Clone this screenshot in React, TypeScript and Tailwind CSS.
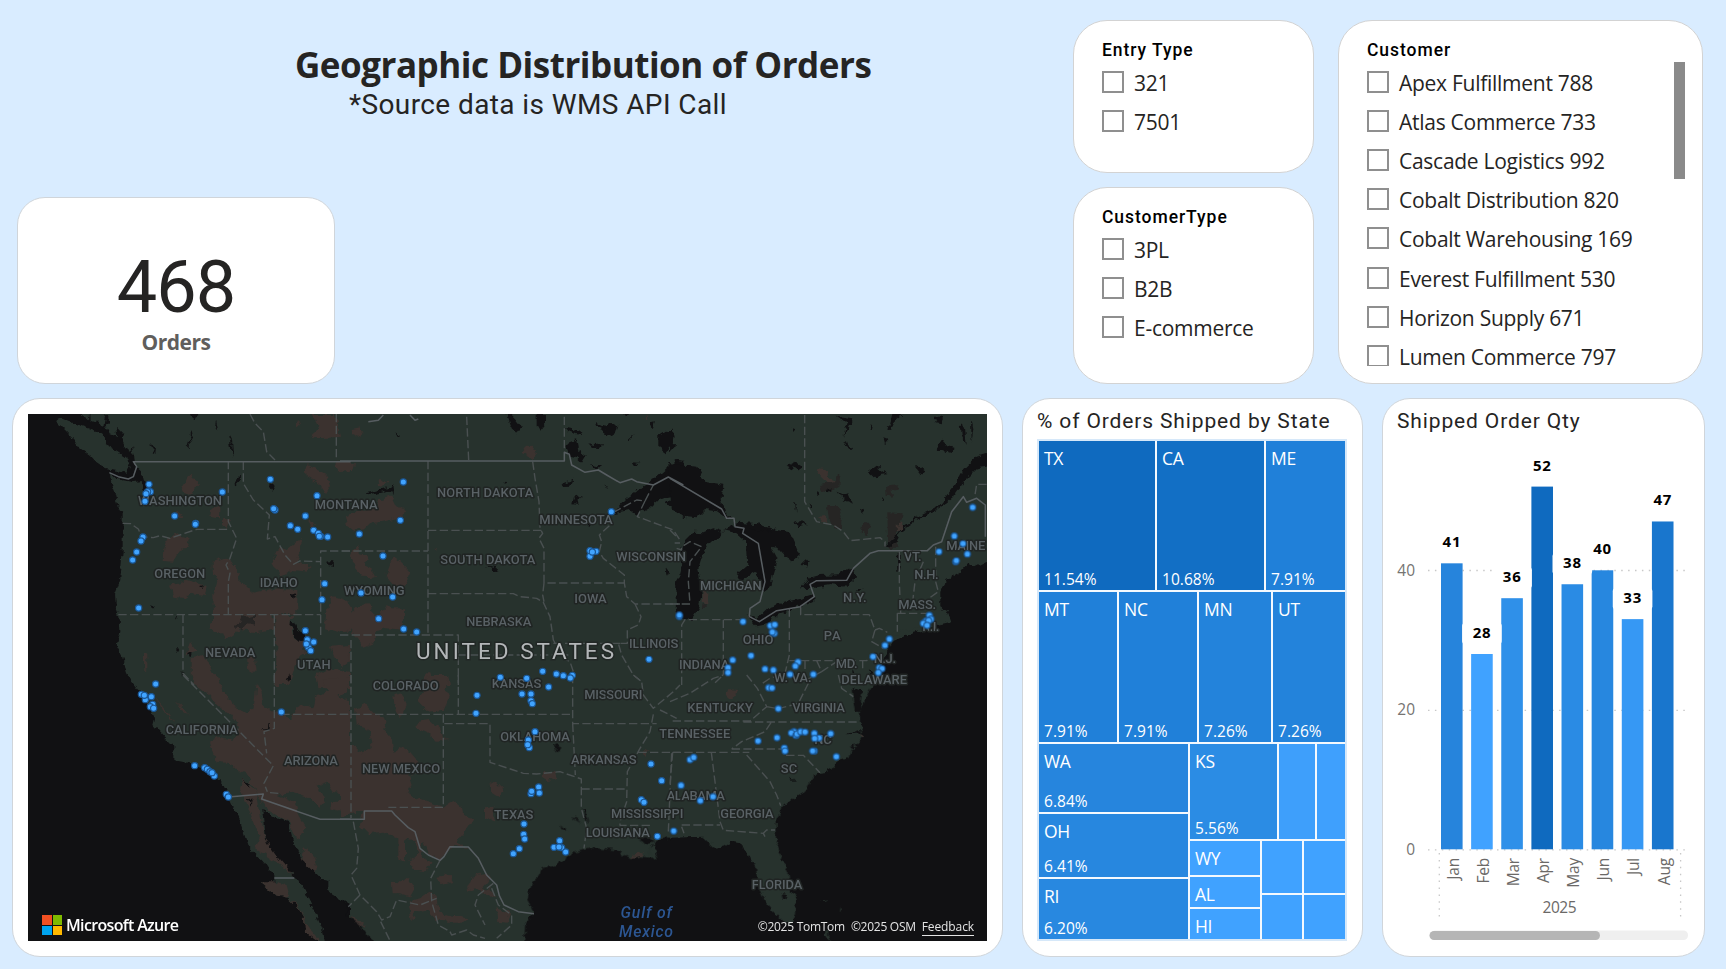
import type { ReactNode } from "react";

const SEGOE = "font-['Open_Sans','Noto_Sans',sans-serif]";
const DIN = "font-['Roboto','Liberation_Sans',sans-serif]";

type Label = [text: string, x1: number, x2: number, baseline: number];

interface Tile {
  x: number;
  y: number;
  water: string;
  lakes: string;
  land: string;
  arid: string;
  urban: string;
  solid: string;
  dashed: string;
  labels: Label[];
  dots: number[][];
}

const tiles: Tile[] = [
  {
    x: 10,
    y: 395,
    water:
      "M0 30H200L225 70L262 84L290 95L302 118L335 130L350 165L372 178L375 210L392 225L396 250L412 262V305L402 290L392 258L370 262L340 256L300 236L303 262L318 300L328 345L338 355V470L330 560L315 600L318 640L328 665L331 710L320 750L340 790L350 835L372 880H0Z",
    lakes:
      "M540 57H565L558 72L545 68ZM615 75L622 110L612 95ZM545 108L548 125L538 140L540 160L530 150ZM657 115L665 130L668 160L675 185L664 165ZM420 145L438 155L436 178L428 180L434 165ZM676 250L690 246L688 262L678 272ZM782 262L795 270L788 290L780 278ZM952 500L970 498L968 512L955 510ZM845 600L860 595L852 612ZM568 574L582 570L574 582ZM420 628L434 632L430 643ZM495 658H504L500 674ZM840 680L852 682L862 705L885 715L886 735L870 738L850 720L848 700L838 692ZM890 768L896 762V776ZM533 770L545 775L541 790ZM498 762L508 764L504 772ZM838 835L840 850L830 858ZM514 826L520 832L516 842ZM290 57L296 80L285 100L280 90L284 70ZM238 57L240 85L230 80ZM318 95L340 118L330 135L322 120ZM365 150L372 180L360 178Z",
    land: "M135 75L150 68L178 80L215 92L250 105L278 122L290 150L325 172L355 195L362 218L350 236L320 228L290 222L260 202L240 180L210 160L190 130L160 100Z",
    arid:
      "M905 57H975L985 90L990 125L960 128L905 130L925 95ZM860 72L870 90L862 95ZM540 235L568 268L548 290L540 305L520 290L515 280ZM470 430L500 418L540 430L530 455L508 470L490 500L458 498L460 460ZM600 345L632 330L630 370L598 365ZM500 345L520 365L490 378ZM480 570L530 555L590 572L585 600L545 595L520 612L490 608ZM608 500L640 488L665 500L682 530L690 560L730 590L780 580L862 585V655L790 660L795 700L740 712L690 705L655 730L620 715L595 695L612 670L610 600L622 560L608 530ZM785 500L810 455L830 465L855 445L880 432L870 465L860 500L905 515L895 530L850 525L810 545ZM795 660H860L838 680L850 725L880 740L885 775L860 790L850 830L835 870H793L800 780ZM885 205L950 240L960 270L945 295L930 270L890 245ZM975 200H1020V230L985 235ZM890 375L915 385L905 400ZM965 605L990 612L1020 640V710H980L945 700L948 655ZM960 755L1020 750V800L975 795ZM920 840L960 820L1020 830V880H925ZM545 790L575 780L600 810L615 850L600 880H560L545 840ZM402 770L412 772L412 830L402 820ZM710 780L735 790L740 830L715 830ZM640 365L660 380L650 405L638 395ZM540 740L560 770L530 780Z",
    urban: "M695 662L710 668L735 662V690L715 685L700 705L675 700Z",
    solid: "M298 233L325 245L355 252L370 245L380 215L370 200H1022",
    dashed:
      "M655 198V380L680 430L660 490L648 510L660 535L655 560V659M700 200V265L730 315L778 360L772 432L795 425L825 480L850 508L870 498L932 500M932 720V468H1024M338 385L362 386L385 402L395 425L430 428L450 422L480 430L560 403H655M325 659H932M519 659V835L552 870M793 659V870M720 57L735 85L760 110L770 170L795 195M979 57V195",
    labels: [
      ["WASHINGTON", 384, 636, 332],
      ["OREGON", 433, 586, 550],
      ["IDAHO", 749, 863, 579],
      ["NEVADA", 585, 736, 789],
      ["UTAH", 861, 962, 825],
    ],
    dots: [[417,268],[421,290],[413,290],[408,296],[405,319],[637,291],[494,363],[557,385],[556,388],[399,426],[393,438],[380,471],[368,495],[386,639],[781,253],[921,302],[795,345],[791,341],[886,363],[841,392],[863,403],[911,406],[925,415],[932,424],[928,424],[953,426],[944,566],[936,614],[886,707],[892,734],[911,741],[895,757],[889,747],[902,767],[437,867]],
  },
  {
    x: 340,
    y: 395,
    water:
      "M820 355L860 310L920 270L950 245L985 215L1010 198L1030 200V350L1000 345L980 325L1010 300L960 310L930 335L890 360L868 345ZM1008 560L1020 540V650H1012Z",
    lakes:
      "M500 57H512L525 70L545 95L530 115L515 100ZM590 57H618V85L600 108L590 90ZM765 80L780 92L800 95L812 82L835 92L828 115L808 122L790 108L772 100ZM955 122L975 110L1000 112L1000 150L978 172L955 155ZM675 150L700 140L708 128L715 165L740 180L725 205L710 190L690 185ZM678 98L695 102L712 110L730 108L725 120L700 115L685 108ZM745 145L765 150L790 148L780 160L755 155ZM750 205L785 212L770 222ZM850 57H870L855 64ZM930 85L945 82L938 100ZM862 135L882 118L870 135ZM880 202L895 203L888 214ZM668 265L700 254L690 275L672 276ZM705 305L722 300L712 315L716 330L700 328ZM790 272L808 276L800 280ZM485 263L503 264L496 270ZM160 268L148 275L118 285L95 292L75 295L90 300L125 293L152 285L160 300L162 288ZM165 116L182 118L178 126ZM440 515L470 520L475 530L455 524ZM980 520L988 530L982 545ZM742 390H752L748 396Z",
    land: "",
    arid:
      "M35 105L60 100L68 115L50 125L38 120ZM0 200L45 205L40 225L0 225ZM120 252L142 262L130 275L112 268ZM558 155L575 155L588 175L575 195L558 180L545 172ZM15 365L60 345L110 340L120 315L155 303L168 330L195 345L190 365L160 372L130 380L90 385L75 400L40 405L20 390ZM30 480L50 450L60 475L85 480L75 510L95 520L105 545L90 550L70 548L45 520ZM140 535L160 485L180 500L210 530L205 560L185 590L165 575L150 555ZM0 610L25 618L35 650L55 630L90 628L95 660L115 655L130 645L140 630L155 640L192 640V705L140 700L110 705L105 740L70 755L45 725L35 700L0 715ZM282 458H290V464ZM0 750L30 755L25 800L0 820ZM240 860L270 830L285 870H245ZM290 850L325 840L330 870H295ZM910 72L924 57L918 76Z",
    urban: "",
    solid:
      "M0 198H673V172L688 178L695 210L735 232L775 225L800 240L840 263L875 252L890 260L940 270L985 246L1030 270M85 80L115 76L130 60M210 60L225 76L235 72",
    dashed:
      "M264 198V716M264 406H610M264 596H520L540 605L590 610L610 622L630 665L640 735L672 790L690 800L700 830M380 65L386 195M673 65V170M578 200L585 250L597 320L600 400L608 415L597 430L612 460V564H853M612 564L608 600L612 620M5 468H264M0 720H355V870M33 735V870M355 780H685M640 745H860M808 392L778 420L785 440L778 470L790 490L853 540V564L860 605L885 627H1020M885 627L903 665L895 690L862 705V745L835 745L845 780L880 840L905 860M820 352L890 315L915 318L940 270M915 318L892 365L1000 405L1020 435M1004 444H1020",
    labels: [
      ["MONTANA", -76, 113, 344],
      ["WYOMING", 12, 194, 602],
      ["NORTH DAKOTA", 291, 580, 308],
      ["SOUTH DAKOTA", 301, 586, 510],
      ["NEBRASKA", 379, 574, 696],
      ["MINNESOTA", 598, 818, 389],
      ["IOWA", 703, 800, 627],
      ["WISCONSIN", 829, 1038, 501],
      ["ILLINOIS", 867, 1015, 761],
    ],
    dots: [[190,261],[181,376],[58,417],[129,483],[63,594],[158,606],[116,671],[191,702],[230,711],[814,350],[750,467],[768,469],[750,484],[757,471],[608,829],[649,837],[670,842],[697,841],[691,849],[481,847],[560,850],[927,793]],
  },
  {
    x: 670,
    y: 395,
    water:
      "M-5 203L40 212L85 215L105 260L160 270L155 310L165 350L190 370L160 362L140 348L105 345L80 370L40 365L0 335ZM40 440L70 410L100 412L130 400L160 410L150 430L120 440L100 470L85 520L90 560L95 600L85 640L65 672L35 675L20 650L22 570L35 520L30 480ZM160 405L195 388L260 388L320 405L360 412L390 480L370 498L340 482L322 462L305 458L322 490L308 540L302 575L285 588L270 560L255 530L235 545L205 555L200 540L235 510L230 440L200 415ZM230 660L262 672L300 635L350 620L400 610L430 600V614L380 640L330 655L290 688L260 694ZM393 580L415 550L450 540L510 538L550 515L558 550L530 575L480 570L430 578ZM635 462L680 422L700 392L760 355L810 330L850 280L880 225L920 185L970 170V213L920 220L880 260L845 310L800 345L740 375L690 412L680 440ZM980 496L951 502L915 520L890 505L870 530L830 555L808 590V640L835 655L845 680L800 690L750 705L700 725L665 740L655 760L640 790L620 840L605 880H980Z",
    lakes:
      "M0 100L14 120L10 160L0 175ZM365 95L376 100L370 115ZM500 62L550 70L535 100L520 125L530 85ZM600 85L608 95L600 108ZM655 105L668 57H700L675 78L665 100ZM640 130L655 135L645 148ZM795 65H820L812 85L800 82ZM872 85L885 95L890 150L875 120ZM903 70L910 100L905 140ZM800 165L820 135L830 150L850 155L848 175L820 165ZM595 232L620 212L635 225L652 238L630 240L615 250ZM735 218L752 215L765 225L750 238ZM350 212L375 200L400 215L385 226ZM520 140L550 158L545 165L528 155ZM500 290L520 300L535 295L548 325L530 318L510 305ZM375 322L383 325L378 348ZM435 295L450 290L445 300ZM470 285L485 280L478 295ZM415 325L428 335L425 345ZM565 345L580 335L580 358ZM395 505L410 490L420 500L408 518ZM640 300L648 310L640 318ZM190 382L260 388L310 402L290 410L220 400ZM370 385L400 376L410 388L385 394ZM560 582H578L570 588ZM683 470H692V520L685 525ZM550 822L556 838L550 836ZM592 820L610 840L605 865Z",
    land: "M668 712L700 706L750 700L785 695L740 712L690 722L668 722Z",
    arid:
      "M437 222L470 225L475 245L500 258L498 265L475 268L460 250L450 240ZM445 368L470 365L472 380L455 382ZM698 382L694 405L668 414L680 390ZM98 590H112V625L98 620ZM650 275L660 290L655 295Z",
    urban:
      "M450 270L495 262L500 240L510 250L508 275L480 290L455 285ZM475 333H502L518 360L512 400L490 395L480 375ZM652 352L698 355L692 385L680 390L682 440L678 458H655ZM648 272L688 268L680 282L665 285V305L650 302ZM580 385H598L588 422L575 412ZM98 625H110V642H96Z",
    solid:
      "M0 250L155 342L170 370L192 370L195 395L222 400L218 415L265 445L285 560L270 620L240 640L238 665L268 680L320 647L390 635L433 605L420 568L440 557L530 556L550 520L600 475L625 467H772L790 450L815 440L835 380L845 350L880 305L890 322L920 310L946 330V425",
    dashed:
      "M404 60V320L440 380L490 390L520 410L540 437L630 428L645 440V455M35 870V690L45 674H210M160 674V840L128 870M358 640V780L345 835L300 850L270 870M392 635V659H598L615 705L605 740L640 760M615 705L628 700L652 712M358 797H590L608 780M688 470V560L692 655M682 655H780M682 655V710M760 500L735 560L728 620M797 455V560L805 590L780 608M0 627H60L55 560L60 500L95 455L60 440L35 455V465L20 460M0 405L25 430M950 268H920L915 300M405 797V830M440 797L455 830L500 800M455 830L400 860M578 797V820",
    labels: [
      ["MICHIGAN", 90, 275, 587],
      ["OHIO", 218, 310, 749],
      ["INDIANA", 27, 178, 825],
      ["PA", 461, 512, 737],
      ["N.Y.", 519, 590, 624],
      ["VT.", 702, 755, 501],
      ["N.H.", 733, 806, 555],
      ["MASS.", 685, 798, 643],
      ["MAINE", 829, 946, 466],
      ["R.I.", 757, 808, 711],
      ["N.J.", 611, 678, 806],
      ["MD.", 497, 563, 821],
      ["DELAWARE", 514, 711, 870],
      ["W. VA.", 312, 425, 862],
    ],
    dots: [[28,664],[28,660],[219,680],[301,692],[314,689],[313,715],[307,711],[243,782],[188,795],[174,818],[174,833],[285,822],[310,825],[384,801],[376,813],[360,838],[430,838],[908,337],[853,423],[879,446],[892,477],[857,500],[859,497],[807,470],[778,661],[783,672],[768,678],[760,685],[776,677],[771,691],[658,732],[645,751],[609,785],[628,818],[636,821],[625,833]],
  },
  {
    x: 10,
    y: 675,
    water:
      "M0 0H350L385 45L420 90L435 130L430 150L490 215L490 255L555 268L610 295L640 330L660 375L690 440L715 515L760 560L793 600V622L750 622L800 665L835 672L880 715L885 770L920 797L950 840H0ZM757 405L795 425L835 440L850 500L880 560L930 610L955 615V650L1020 690V840H950L940 770L910 700L880 640L850 600L800 540L765 490Z",
    lakes: "M698 313L722 325L715 338ZM712 365L725 378L722 392ZM775 145H780L778 165L755 164L774 158Z",
    land: "",
    arid:
      "M600 200L625 185L670 195L690 160L660 120L620 90L600 60L570 40L545 0H605L625 10L640 45L665 85L700 110L730 105L740 25L755 50L760 90L793 110L840 130L870 90L910 100L920 60L960 50L935 10H1020V30L985 60L1020 80V290L990 320L1010 360L970 350L950 320L920 330L945 380L930 400L900 370L850 350L800 360L830 372L855 385L865 420L885 455L870 490L850 480L840 440L800 420L762 395L740 350L710 300L680 285L660 265L620 260ZM785 180L810 180L840 235L820 250L795 215ZM860 140L890 175L860 205L845 175ZM700 310L740 350L750 410L765 490L815 540L840 580L850 600L820 575L780 550L735 520L750 490L715 400L690 340ZM750 622L793 620L830 630L838 660L830 672L800 665ZM840 672L880 710L890 750L930 797H890L880 760ZM885 520L905 530L922 570L915 610L885 585L870 555ZM970 380H1000V410L960 400ZM430 60L470 110L495 150L465 115ZM500 75L540 125L520 112ZM565 185L570 210ZM990 725L1020 740V760Z",
    urban: "",
    solid: "M655 366L760 357L755 372L930 433H1022M793 609H853",
    dashed: "M519 0L790 272L762 325L772 350M793 0V160L762 170L770 235M814 118H1020M805 355L770 352",
    labels: [
      ["CALIFORNIA", 467, 684, 180],
      ["ARIZONA", 822, 984, 273],
    ],
    dots: [[394,58],[406,74],[403,61],[424,65],[428,88],[421,95],[431,100],[814,111],[554,272],[584,278],[592,283],[600,290],[613,303],[606,293],[649,358],[655,366]],
  },
  {
    x: 340,
    y: 675,
    water:
      "M1024 490L980 488L950 500L930 520L950 550L900 545L870 550L825 525L790 522L750 518L700 530L680 550L640 572L605 580L600 600L578 620L562 670L578 715L555 750L552 840H1024ZM-20 665L5 675L20 690V720L60 750L85 780L120 840H-20Z",
    lakes:
      "M640 205L665 215L650 232ZM695 428L708 430L724 445ZM660 452L682 465L672 470ZM726 400L736 410L745 445L735 430ZM888 490L930 490L945 500L920 508Z",
    land: "M925 525L945 510L950 540L935 552Z",
    arid:
      "M0 0H18V55L0 65ZM45 100L75 85L110 120L138 130L130 160L155 190L160 230L185 215L210 230L235 260L230 295L205 300L215 330L200 355L260 378L310 395L340 375L365 395L370 420L400 430L375 470L350 500L390 520L345 512L320 530L300 555L265 540L250 500L245 545L275 560L260 590L215 580L210 555L235 535L220 495L195 490V560L175 555V490L130 470L85 475L60 450L70 405L0 425V210L45 210L65 235L95 215L85 160L50 150ZM160 60L185 55L200 90L180 130L165 110ZM230 75L250 50L240 30L270 0H325L315 50L330 60L310 105L265 110ZM230 140L270 135L300 160L310 190L330 195L290 200L260 170L235 160ZM450 330L465 320L490 345L480 370L450 350ZM435 400L460 395L465 440L435 430ZM610 290H645L650 308L625 318L605 305ZM155 620L185 622L205 605L225 640L210 665L180 655L158 655ZM285 605L330 600L340 618L305 628ZM205 680L240 670L270 650L290 665L295 710L330 720L385 730L375 740L320 740L290 735L260 705L225 710L215 740ZM395 605L440 592L450 610L425 640L455 640L465 670L440 662L405 640L375 655ZM470 700L510 715L500 740L475 738ZM865 548L910 530L912 540L880 550ZM912 225L930 230L915 250ZM30 725L60 735L75 755L45 748Z",
    urban: "",
    solid: "M0 433H73V408H155L165 420L205 458L225 470L240 520L265 540L300 556L312 545L330 515L385 516L415 550L440 600L470 630L478 662L492 690L535 710L582 716",
    dashed:
      "M33 0V430M0 118H698M310 118V397H145M313 146H450V262L520 285L550 295L590 297L660 290L724 312V400L740 460L732 520M355 0V118M698 0V146H950M698 146L706 300M724 342H855M940 118L930 170L900 220L862 290L860 380L840 440V451H930M880 0L905 20L910 60L940 100L1000 50L1020 30M960 105L1010 130M895 232H1020M995 235L985 470M40 440L55 520L50 580L33 600L60 660L110 710L125 735L150 725L170 675L240 690L290 670M60 660L25 695M300 556L272 610L275 680L295 750L330 770M122 740L150 797M330 770L335 780L380 765L400 780L435 790M460 625L415 660L405 690L435 750M455 640L475 690L515 720V750L470 790",
    labels: [
      ["COLORADO", 98, 296, 46],
      ["KANSAS", 455, 604, 42],
      ["MISSOURI", 733, 907, 75],
      ["OKLAHOMA", 481, 690, 200],
      ["NEW MEXICO", 66, 301, 297],
      ["ARKANSAS", 693, 890, 269],
      ["TEXAS", 462, 580, 434],
      ["LOUISIANA", 737, 930, 487],
      ["MISSISSIPPI", 813, 1030, 430],
    ],
    dots: [[411,61],[408,115],[626,36],[546,57],[573,57],[573,77],[577,86],[585,170],[565,195],[568,218],[563,209],[596,336],[573,356],[575,349],[598,354],[552,447],[551,478],[554,492],[538,521],[520,536],[659,497],[642,517],[665,518],[657,516],[677,531],[933,267],[965,317],[904,374],[912,382],[952,484]],
  },
  {
    x: 670,
    y: 675,
    water:
      "M980 0H620L605 35L580 70L570 105V140L582 180L545 225L535 250L500 260L475 290L440 295L420 320L410 345L370 370L335 400L317 440L318 500L340 560L356 600L360 640L380 670L378 720L360 750L340 742L300 700L280 670L262 630L258 575L240 545L210 505L185 500L160 515L135 518L100 485L50 487L-10 490V840H980ZM545 38L576 50L570 110H555L550 80ZM530 178L570 165L580 175ZM540 215L565 210L550 225Z",
    lakes: "M335 655L352 658L350 672L340 674ZM355 305L375 318L362 316ZM280 665L290 668L284 678Z",
    land: "M448 680L480 676L470 680ZM512 690L516 705L510 712ZM462 775L475 765V785L482 800L470 790ZM575 60L600 45L582 75L572 105Z",
    arid: "M178 42L205 45L195 60L180 72L170 62ZM574 172L586 182L576 186Z",
    urban: "",
    solid: "",
    dashed:
      "M8 138H240L290 95M220 141H570M303 143L285 170L215 200L185 222M8 232H238M185 222L340 222L350 241H400L450 293M230 240L300 320L320 360L332 392M124 232L150 440L160 466L280 475L290 465L315 465M280 475L285 485M35 450H150M35 455L42 475M8 232L0 330M290 95L325 101L385 85L420 15M0 80L60 55L130 10L160 0M230 0L262 40L290 95M505 0L515 40L550 65",
    labels: [
      ["TENNESSEE", -32, 181, 192],
      ["ALABAMA", -10, 165, 378],
      ["KENTUCKY", 52, 249, 112],
      ["VIRGINIA", 367, 525, 112],
      ["NC", 433, 485, 208],
      ["SC", 332, 382, 297],
      ["GEORGIA", 151, 311, 430],
      ["FLORIDA", 245, 397, 645],
    ],
    dots: [[296,38],[306,39],[325,101],[264,198],[321,188],[372,170],[364,174],[378,181],[381,177],[392,170],[405,171],[433,175],[447,189],[434,190],[482,176],[343,219],[345,228],[433,228],[428,228],[499,245],[60,254],[71,247],[33,331],[129,365],[91,377],[11,468]],
  },
];

const frame = (t: Tile) => `translate(${t.x} ${t.y}) scale(0.33333)`;

function OrdersMap() {
  return (
    <svg viewBox="28 414 959 527" className="block h-[527px] w-[959px] bg-[#27322d]">
      <defs>
        <filter id="coast" filterUnits="userSpaceOnUse" x="0" y="390" width="1020" height="580" colorInterpolationFilters="sRGB">
          <feTurbulence type="fractalNoise" baseFrequency="0.16" numOctaves="2" seed="4" result="n" />
          <feDisplacementMap in="SourceGraphic" in2="n" scale="7" xChannelSelector="R" yChannelSelector="G" />
        </filter>
      </defs>
      <g filter="url(#coast)">
        {tiles.map((t, i) => (
          <g key={i} transform={frame(t)}>
            <path d={t.arid} fill="#3b322f" />
            <path d={t.urban} fill="#262524" />
          </g>
        ))}
        {tiles.map((t, i) => (
          <g key={i} transform={frame(t)}>
            <path d={t.water} fill="#111113" />
            <path d={t.lakes} fill="#111113" />
            <path d={t.land} fill="#27322d" />
          </g>
        ))}
      </g>
      {tiles.map((t, i) => (
        <g key={i} transform={frame(t)} fill="none" strokeLinejoin="round">
          <path d={t.dashed} strokeWidth="4.2" strokeDasharray="25 10" stroke="#4a5051" />
          <path d={t.solid} strokeWidth="4.6" stroke="#575d61" />
        </g>
      ))}
      {tiles.map((t, i) => (
        <g
          key={i}
          transform={frame(t)}
          className="font-['Roboto',sans-serif] font-medium"
          fontSize="39"
          fill="#596165"
          stroke="#202423"
          strokeWidth="9"
          strokeLinejoin="round"
          paintOrder="stroke"
        >
          {t.labels.map(([s, a, b, y]) => (
            <text key={s} x={a} y={y - 2} textLength={b - a}>
              {s}
            </text>
          ))}
        </g>
      ))}
      <text
        x="416"
        y="659.3"
        textLength="198"
        fontSize="22.5"
        className="font-['Roboto',sans-serif]"
        fill="#b3b6b8"
        stroke="#222826"
        strokeWidth="3"
        paintOrder="stroke"
      >
        UNITED STATES
      </text>
      <g className="font-['Roboto',sans-serif] italic" fontSize="15.8" fontWeight="500" fill="#2c5692">
        <text x="620.5" y="918.3" textLength="51.5">
          Gulf of
        </text>
        <text x="619" y="937" textLength="54">
          Mexico
        </text>
      </g>
      {tiles.map((t, i) => (
        <g key={i} transform={frame(t)} fill="#41a4ff" stroke="#1b5796" strokeWidth="3.5">
          {t.dots.map(([x, y], j) => (
            <circle key={j} cx={x} cy={y} r="9.3" />
          ))}
        </g>
      ))}
    </svg>
  );
}

function Slicer({ title, items, className, listClass = "" }: { title: string; items: string[]; className: string; listClass?: string }) {
  return (
    <div className={`overflow-hidden border border-[#d3d3d3] bg-white pl-[28px] pt-[18px] ${className}`}>
      <div className={`${DIN} h-[23px] text-[17.5px] leading-[23px] font-medium tracking-[0.95px] text-black`}>{title}</div>
      <div className={`overflow-hidden ${listClass}`}>
        {items.map((s) => (
          <label key={s} className="flex h-[39.2px] items-center gap-[10px]">
            <span className="size-[22px] shrink-0 border-2 border-[#8f8f8f] bg-white" />
            <span className={`${SEGOE} pt-[2px] text-[21px] leading-[28px] tracking-[-0.27px] whitespace-nowrap text-[#252423]`}>{s}</span>
          </label>
        ))}
      </div>
    </div>
  );
}

function Cell({ name, pct, className }: { name?: string; pct?: string; className: string }) {
  return (
    <div className={`${SEGOE} flex min-h-0 min-w-0 flex-col justify-between overflow-hidden pl-[5px] text-white ${className}`}>
      {name && <span className="pt-[5px] text-[17.5px] leading-[24px] tracking-[-0.3px]">{name}</span>}
      {pct && <span className="text-[15.5px] leading-[22px] tracking-[0.05px]">{pct}</span>}
    </div>
  );
}

function Treemap() {
  return (
    <div className="flex h-[502px] w-[310px] flex-col gap-[2px] border-2 border-[#d6e8f9] bg-[#f4f9fe]">
      <div className="flex h-[149px] gap-[2px]">
        <Cell name="TX" pct="11.54%" className="w-[116px] bg-[#0f6abf]" />
        <Cell name="CA" pct="10.68%" className="w-[107px] bg-[#126fc5]" />
        <Cell name="ME" pct="7.91%" className="flex-1 bg-[#2080d9]" />
      </div>
      <div className="flex h-[150px] gap-[2px]">
        <Cell name="MT" pct="7.91%" className="w-[78px] bg-[#2080d9]" />
        <Cell name="NC" pct="7.91%" className="w-[78px] bg-[#2080d9]" />
        <Cell name="MN" pct="7.26%" className="w-[72px] bg-[#2383db]" />
        <Cell name="UT" pct="7.26%" className="flex-1 bg-[#2383db]" />
      </div>
      <div className="flex min-h-0 flex-1 gap-[2px]">
        <div className="flex w-[149px] flex-col gap-[2px]">
          <Cell name="WA" pct="6.84%" className="h-[68px] bg-[#2685dd]" />
          <Cell name="OH" pct="6.41%" className="h-[63px] bg-[#2787df]" />
          <Cell name="RI" pct="6.20%" className="flex-1 bg-[#2888e0]" />
        </div>
        <div className="flex flex-1 flex-col gap-[2px]">
          <div className="flex h-[95px] gap-[2px]">
            <Cell name="KS" pct="5.56%" className="w-[86.5px] bg-[#2b8ce4]" />
            <Cell className="w-[36px] bg-[#3e9ffb]" />
            <Cell className="flex-1 bg-[#3fa0fd]" />
          </div>
          <div className="flex min-h-0 flex-1 gap-[2px]">
            <div className="flex w-[69.5px] flex-col gap-[2px]">
              <Cell name="WY" className="h-[34px] bg-[#40a2ff]" />
              <Cell name="AL" className="h-[30px] bg-[#40a2ff]" />
              <Cell name="HI" className="flex-1 bg-[#40a2ff]" />
            </div>
            <div className="grid flex-1 grid-cols-2 grid-rows-[52px_1fr] gap-[2px]">
              <div className="bg-[#40a2ff]" />
              <div className="bg-[#40a2ff]" />
              <div className="bg-[#40a2ff]" />
              <div className="bg-[#40a2ff]" />
            </div>
          </div>
        </div>
      </div>
    </div>
  );
}

const bars: [string, number, string][] = [
  ["Jan", 41, "#2684dc"],
  ["Feb", 28, "#40a2ff"],
  ["Mar", 36, "#2f90e9"],
  ["Apr", 52, "#0f6abf"],
  ["May", 38, "#2a8be4"],
  ["Jun", 40, "#2787df"],
  ["Jul", 33, "#3698f4"],
  ["Aug", 47, "#1976cd"],
];

function BarChart() {
  const top = (v: number) => 849.3 - v * 6.975;
  const left = (i: number) => 1441 + i * 30.13;
  return (
    <svg viewBox="1390 440 310 510" className={`${SEGOE} block h-[510px] w-[310px]`}>
      <g stroke="#c8c8c8" strokeWidth="1.3" strokeDasharray="1.5 5.4">
        <path d="M1428 570.5H1687M1428 710.3H1687M1428 849.8H1687" />
        <path d="M1439.3 853V922M1680.6 853V922" />
      </g>
      <g fill="#767472" fontSize="15.5" textAnchor="end">
        <text x="1415" y="576">40</text>
        <text x="1415" y="715.3">20</text>
        <text x="1415" y="855">0</text>
      </g>
      {bars.map(([m, v, c], i) => (
        <rect key={m} x={left(i)} y={top(v)} width="21.6" height={v * 6.975} fill={c} />
      ))}
      {bars.map(([m, v], i) => (
        <g key={m}>
          <rect x={left(i) - 9} y={top(v) - 31} width="39.6" height="21" rx="3" fill="#fff" />
          <text x={left(i) + 10.5} y={top(v) - 16} textAnchor="middle" fontSize="15" fontWeight="700" textLength="18">
            {v}
          </text>
          <text
            transform={`translate(${left(i) + 17.6} 858) rotate(-90)`}
            textAnchor="end"
            fontSize="15.5"
            fill="#6b6967"
            letterSpacing="-0.2"
          >
            {m}
          </text>
        </g>
      ))}
      <text x="1559.5" y="913" textAnchor="middle" fontSize="15.5" fill="#6b6967" textLength="34">
        2025
      </text>
      <rect x="1431" y="930.5" width="257" height="9.5" rx="4.5" fill="#efefef" />
      <rect x="1429.5" y="931" width="170.5" height="9" rx="4.5" fill="#b5b5b5" />
    </svg>
  );
}

function Card({ className, children }: { className: string; children: ReactNode }) {
  return <section className={`border border-[#d0d5da] bg-white ${className}`}>{children}</section>;
}

export default function App() {
  return (
    <main className="h-[969px] w-[1726px] overflow-hidden bg-[#d9ecff]">
      <div className="flex h-[398px] pt-[20px]">
        <div className="w-[1073px] pl-[17px]">
          <header className="h-[177px] pt-[20px]">
            <h1 className={`${SEGOE} pl-[278px] text-[35px] leading-[50px] font-bold tracking-[-0.48px] whitespace-nowrap text-[#252423]`}>
              Geographic Distribution of Orders
            </h1>
            <p className={`${DIN} pl-[332px] text-[28px] leading-[30px] tracking-[0.4px] whitespace-nowrap text-[#252423]`}>
              *Source data is WMS API Call
            </p>
          </header>
          <Card className="flex h-[187px] w-[318px] flex-col items-center rounded-[28px] pt-[52px]">
            <div className={`${DIN} text-[72px] leading-[76px] tracking-[-1px] text-[#252423]`}>468</div>
            <div className={`${SEGOE} mt-[1px] text-[21px] leading-[30px] font-bold tracking-[-0.5px] text-[#605e5c]`}>Orders</div>
          </Card>
        </div>
        <div className="mr-[24px] flex w-[241px] flex-col gap-[14px]">
          <Slicer title="Entry Type" items={["321", "7501"]} className="h-[153px] rounded-[34px]" />
          <Slicer title="CustomerType" items={["3PL", "B2B", "E-commerce"]} className="h-[197px] rounded-[34px]" />
        </div>
        <div className="relative h-[364px] w-[365px]">
          <Slicer
            title="Customer"
            items={[
              "Apex Fulfillment 788",
              "Atlas Commerce 733",
              "Cascade Logistics 992",
              "Cobalt Distribution 820",
              "Cobalt Warehousing 169",
              "Everest Fulfillment 530",
              "Horizon Supply 671",
              "Lumen Commerce 797",
            ]}
            className="h-[364px] rounded-[34px]"
            listClass="h-[304px]"
          />
          <div className="absolute top-[42px] left-[336px] h-[117px] w-[11px] bg-[#8a8a8a]" />
        </div>
      </div>
      <div className="flex h-[559px] pl-[12px]">
        <Card className="w-[991px] rounded-[28px] pt-[15px] pl-[15px]">
          <div className="relative h-[527px] w-[959px] overflow-hidden">
            <OrdersMap />
            <div className="absolute bottom-[3px] left-[14px] flex items-center gap-[4px]">
              <div className="grid grid-cols-2 gap-[1px]">
                <i className="size-[9.5px] bg-[#f25022]" />
                <i className="size-[9.5px] bg-[#7fba00]" />
                <i className="size-[9.5px] bg-[#00a4ef]" />
                <i className="size-[9.5px] bg-[#ffb900]" />
              </div>
              <span className={`${SEGOE} text-[16px] leading-[26px] font-semibold tracking-[-0.65px] text-white`}>Microsoft Azure</span>
            </div>
            <div className={`${SEGOE} absolute right-[13px] bottom-[5px] flex gap-[6px] text-[12px] leading-[17px] tracking-[-0.27px] whitespace-nowrap text-[#e4e4e4]`}>
              <span>©2025 TomTom</span>
              <span>©2025 OSM</span>
              <span className="border-b border-[#e4e4e4] tracking-[-0.1px]">Feedback</span>
            </div>
          </div>
        </Card>
        <Card className="ml-[19px] w-[341px] rounded-[28px] pt-[7px] pl-[14px]">
          <h2 className={`${DIN} h-[33px] text-[21px] leading-[30px] tracking-[0.87px] whitespace-nowrap text-[#252423]`}>% of Orders Shipped by State</h2>
          <Treemap />
        </Card>
        <Card className="ml-[19px] w-[323px] rounded-[28px] pt-[7px]">
          <h2 className={`${DIN} h-[34px] pl-[14px] text-[21px] leading-[30px] tracking-[0.87px] text-[#252423]`}>Shipped Order Qty</h2>
          <div className="pl-[7px]">
            <BarChart />
          </div>
        </Card>
      </div>
    </main>
  );
}
